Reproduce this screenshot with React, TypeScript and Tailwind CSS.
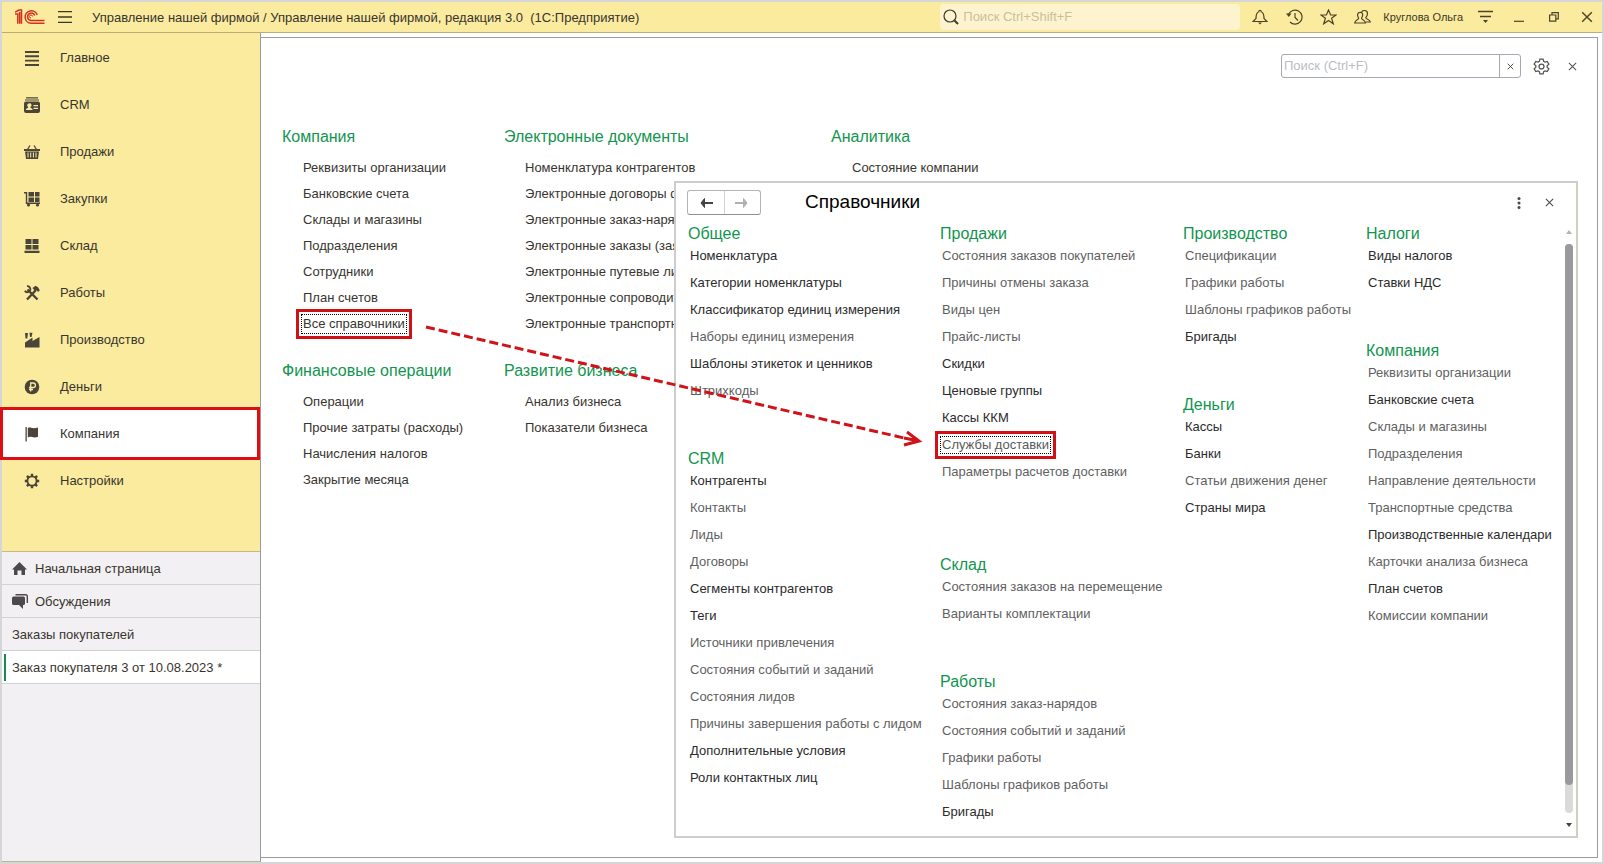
import type { ReactNode } from "react";

type Entry = [name: string, main?: boolean];
type Group = { title: string; items: Entry[]; space?: string };

const sections: { name: string; icon: ReactNode; active?: boolean }[] = [
  { name: "Главное", icon: <path d="M1 2h14M1 6.300h14M1 10.600h14M1 15h14" stroke="currentColor" strokeWidth="1.900" /> },
  {
    name: "CRM",
    icon: (
      <>
        <path d="M2 .8h12M1 3h14" stroke="currentColor" strokeWidth="1.2" />
        <path fillRule="evenodd" d="M2 4.500h12a2 2 0 0 1 2 2V14a2 2 0 0 1-2 2H2a2 2 0 0 1-2-2V6.500a2 2 0 0 1 2-2zM5 6.500a1.800 1.800 0 0 0-1 3.300v1L2 12v1h6.500v-1l-2-1.200v-1A1.800 1.800 0 0 0 5 6.500zM9.500 8v1.200H14V8zm0 2.800V12H14v-1.200z" />
      </>
    ),
  },
  {
    name: "Продажи",
    icon: (
      <>
        <path d="M3.500 5.500 6 1.500M12.500 5.500 10 1.500" stroke="currentColor" strokeWidth="1.300" fill="none" />
        <path d="M0 5h16v2H0z" />
        <path fillRule="evenodd" d="M1 7.500h14L14 15H2zM3.500 8.500v5h1v-5zm2.700 0v5h1v-5zm2.700 0v5h1v-5zm2.600 0v5h1v-5z" />
      </>
    ),
  },
  {
    name: "Закупки",
    icon: (
      <>
        <path d="M0 1.700h2.500v10.600H16" stroke="currentColor" strokeWidth="1.400" fill="none" />
        <path d="M4.500 1H10v4.500H4.500zM11 1h4.500v4.500H11zM4.500 6.500H10V11H4.500zM11 6.500h4.500V11H11z" />
        <circle cx="4.500" cy="14" r="1.600" />
        <circle cx="13.500" cy="14" r="1.600" />
      </>
    ),
  },
  {
    name: "Склад",
    icon: <path d="M1.500 1h6v5h-6zM8.500 1h6v5h-6zM1.500 7h6v4.500h-6zM8.500 7h6v4.500h-6zM.5 12.800h15V15H.5z" />,
  },
  {
    name: "Работы",
    icon: (
      <>
        <path d="M3.500 4.500 13.500 14.500M12 5 3 14.500" stroke="currentColor" strokeWidth="2.400" fill="none" />
        <path d="M.8 5.800A3 3 0 1 0 3 1.200" stroke="currentColor" strokeWidth="1.800" fill="none" />
        <path d="m8.500 3 3-2.200 2.500 1.500 1.800 3-1.600 1.800-1.700-2-1.500.9z" />
      </>
    ),
  },
  { name: "Производство", icon: <path d="M1 1h3l-.7 5.500H1.500zM5.500.8h3L7.500 5H6zM1 10.500 8.500 5.500V9L15.500 5v10.500H1z" /> },
  {
    name: "Деньги",
    icon: (
      <>
        <circle cx="8" cy="8" r="7.300" />
        <path d="M6.700 12.500V4h2.500a2.200 2.200 0 0 1 0 4.500H5M5 10.500h4" stroke="#fbeb9e" strokeWidth="1.300" fill="none" />
      </>
    ),
  },
  { name: "Компания", active: true, icon: <path d="M1.500 1h1.300v14.500H1.500zM3.800 2C6 .5 8 3.500 14 1.500v9.300C9 13 7 9.500 3.800 11.500z" /> },
  {
    name: "Настройки",
    icon: (
      <>
        <circle cx="8" cy="8" r="4.600" stroke="currentColor" strokeWidth="1.900" fill="none" />
        <path
          d="M8 .8v2.700M8 12.500v2.700M.8 8h2.700M12.500 8h2.700M2.900 2.900l1.900 1.900M11.200 11.200l1.900 1.900M2.900 13.100l1.900-1.900M11.200 4.800l1.900-1.900"
          stroke="currentColor"
          strokeWidth="2.400"
        />
      </>
    ),
  },
];

const company: { title: string; items: string[] }[] = [
  {
    title: "Компания",
    items: [
      "Реквизиты организации",
      "Банковские счета",
      "Склады и магазины",
      "Подразделения",
      "Сотрудники",
      "План счетов",
      "Все справочники",
    ],
  },
  {
    title: "Электронные документы",
    items: [
      "Номенклатура контрагентов",
      "Электронные договоры ф",
      "Электронные заказ-наряд",
      "Электронные заказы (зая",
      "Электронные путевые ли",
      "Электронные сопроводит",
      "Электронные транспортн",
    ],
  },
  { title: "Аналитика", items: ["Состояние компании"] },
  {
    title: "Финансовые операции",
    items: ["Операции", "Прочие затраты (расходы)", "Начисления налогов", "Закрытие месяца"],
  },
  { title: "Развитие бизнеса", items: ["Анализ бизнеса", "Показатели бизнеса"] },
];

const catalogs: Group[][] = [
  [
    {
      title: "Общее",
      items: [
        ["Номенклатура", true],
        ["Категории номенклатуры", true],
        ["Классификатор единиц измерения", true],
        ["Наборы единиц измерения"],
        ["Шаблоны этикеток и ценников", true],
        ["Штрихкоды"],
      ],
    },
    {
      title: "CRM",
      items: [
        ["Контрагенты", true],
        ["Контакты"],
        ["Лиды"],
        ["Договоры"],
        ["Сегменты контрагентов", true],
        ["Теги", true],
        ["Источники привлечения"],
        ["Состояния событий и заданий"],
        ["Состояния лидов"],
        ["Причины завершения работы с лидом"],
        ["Дополнительные условия", true],
        ["Роли контактных лиц", true],
      ],
    },
  ],
  [
    {
      title: "Продажи",
      space: "mb-[70px]",
      items: [
        ["Состояния заказов покупателей"],
        ["Причины отмены заказа"],
        ["Виды цен"],
        ["Прайс-листы"],
        ["Скидки", true],
        ["Ценовые группы", true],
        ["Кассы ККМ", true],
        ["Службы доставки"],
        ["Параметры расчетов доставки"],
      ],
    },
    { title: "Склад", items: [["Состояния заказов на перемещение"], ["Варианты комплектации"]] },
    {
      title: "Работы",
      items: [
        ["Состояния заказ-нарядов"],
        ["Состояния событий и заданий"],
        ["Графики работы"],
        ["Шаблоны графиков работы"],
        ["Бригады", true],
      ],
    },
  ],
  [
    {
      title: "Производство",
      items: [["Спецификации"], ["Графики работы"], ["Шаблоны графиков работы"], ["Бригады", true]],
    },
    {
      title: "Деньги",
      items: [["Кассы", true], ["Банки", true], ["Статьи движения денег"], ["Страны мира", true]],
    },
  ],
  [
    { title: "Налоги", items: [["Виды налогов", true], ["Ставки НДС", true]] },
    {
      title: "Компания",
      items: [
        ["Реквизиты организации"],
        ["Банковские счета", true],
        ["Склады и магазины"],
        ["Подразделения"],
        ["Направление деятельности"],
        ["Транспортные средства"],
        ["Производственные календари", true],
        ["Карточки анализа бизнеса"],
        ["План счетов", true],
        ["Комиссии компании"],
      ],
    },
  ],
];

// focused link with a red frame around it
const marked = "-ml-[2px] border border-dotted border-black px-px outline-3 outline-[#d01217]";

const Cross = ({ size }: { size: number }) => (
  <svg width={size} height={size} viewBox="0 0 10 10" stroke="currentColor" strokeWidth="1.200">
    <path d="M1 1l8 8M9 1l-8 8" />
  </svg>
);

const TitleBar = () => (
  <header className="flex h-[31px] items-center border-b border-[#b9ae78] bg-[#fbeb9e] pl-[13px] pr-[9px]">
    <svg width="30" height="16" viewBox="0 0 30 16" fill="none" stroke="#d3301f" strokeWidth="1.500">
      <path d="M0 5h2.800v9.800M0 3.200 4 1h2.500v13.800M4.700 3v11.800" />
      <path d="M22.200 6A6.200 6.200 0 1 0 16 14.200H29.500" />
      <path d="M19.800 6.500A3.700 3.700 0 1 0 16 11.500H29.500" />
      <path d="M17.500 7.500A1.500 1.500 0 1 0 16 9" strokeWidth="1" />
    </svg>
    <button aria-label="Меню" className="ml-[13px]">
      <svg width="14" height="12" viewBox="0 0 14 12" stroke="#3c3827" strokeWidth="1.300">
        <path d="M0 .7h14M0 6h14M0 11.300h14" />
      </svg>
    </button>
    <h1 className="ml-5 flex-1 whitespace-pre pt-px text-[13px]">
      Управление нашей фирмой / Управление нашей фирмой, редакция 3.0  (1С:Предприятие)
    </h1>
    <label className="flex h-[26px] w-[300px] items-center gap-1 rounded-sm bg-[#fdf4cf] px-[3px]">
      <svg width="16" height="16" viewBox="0 0 16 16" fill="none" stroke="#3c3827">
        <circle cx="7" cy="7" r="6" strokeWidth="1.200" />
        <path d="m11.500 11.500 3.500 3.500" strokeWidth="2" />
      </svg>
      <input
        aria-label="Поиск"
        placeholder="Поиск Ctrl+Shift+F"
        className="min-w-0 flex-1 bg-transparent text-[13px] outline-none placeholder:text-[#c9bf9b]"
      />
    </label>
    <div className="flex items-center text-[#4b432a]">
      <button aria-label="Уведомления" className="ml-3">
        <svg width="16" height="16" viewBox="0 0 16 16" fill="none" stroke="currentColor" strokeWidth="1.200">
          <path d="M1 12.500h14L12 9.500C12 5 11.500 3.500 9.300 2.700 9 1 7 1 6.700 2.700 4.500 3.500 4 5 4 9.500z" />
          <path d="M6 13.500h4L8 15.500z" fill="currentColor" stroke="none" />
        </svg>
      </button>
      <button aria-label="История" className="ml-[18px]">
        <svg width="17" height="16" viewBox="0 0 17 16" fill="none" stroke="currentColor" strokeWidth="1.200">
          <path d="M2.500 5.500A7 7 0 1 1 4 13M9 4v4.500l3 3" />
          <path d="M0 4.500h5.500L2.800 8z" fill="currentColor" stroke="none" />
        </svg>
      </button>
      <button aria-label="Избранное" className="ml-[17px]">
        <svg width="17" height="16" viewBox="0 0 17 16" fill="none" stroke="currentColor" strokeWidth="1.200">
          <path d="m8.500 1 2.100 5H16l-4.400 3.300 1.700 5.500-4.800-3.400-4.800 3.400 1.700-5.500L1 6h5.400z" />
        </svg>
      </button>
      <button aria-label="Пользователи" className="ml-[17px]">
        <svg width="17" height="16" viewBox="0 0 17 16" fill="none" stroke="currentColor" strokeWidth="1.200">
          <path d="M7.500 3.500C8 .7 13.500.7 13.500 4.500c0 2-.8 3.200-1.700 4.200 0 1.800 4.200 1.300 4.500 4.300h-4.500" />
          <path d="M6.300 3.300c-3 0-3.600 3-1.600 6C4.500 11 1 10.500.7 14h10.800c-.3-3.500-3.800-3-4-4.700 2-3 1.400-6-1.200-6z" />
        </svg>
      </button>
      <span className="ml-3 text-[11px] text-[#3c3827]">Круглова Ольга</span>
      <button aria-label="Сервис" className="ml-[15px]">
        <svg width="15" height="14" viewBox="0 0 15 14" stroke="currentColor" strokeWidth="1.300">
          <path d="M0 1.500h15M2 6.500h11" />
          <path d="M5 10h5l-2.500 3z" fill="currentColor" stroke="none" />
        </svg>
      </button>
      <button aria-label="Свернуть" className="ml-[21px]">
        <svg width="10" height="10" viewBox="0 0 10 10" stroke="currentColor" strokeWidth="1.200">
          <path d="M0 9.300h10" />
        </svg>
      </button>
      <button aria-label="Развернуть" className="ml-[25px]">
        <svg width="10" height="10" viewBox="0 0 10 10" fill="none" stroke="currentColor" strokeWidth="1.200">
          <path d="M.6 3h6.200v6.200H.6zM3 3V.6h6.300v6.200H7" />
        </svg>
      </button>
      <button aria-label="Закрыть" className="ml-[22px]">
        <Cross size={12} />
      </button>
    </div>
  </header>
);

const Sidebar = () => (
  <aside className="flex w-[259px] shrink-0 flex-col border-r border-b border-r-[#9b9b9b] border-b-[#b9b88c] bg-[#f2f0f2]">
    <nav className="h-[519px] border-b border-[#c3b98a] bg-[#fbeb9e] pt-px">
      {sections.map((s) => (
        <a
          key={s.name}
          href="#"
          className={s.active ? "relative flex h-[47px] items-center bg-white pl-[22px]" : "flex h-[47px] items-center pl-[22px]"}
        >
          <svg width="16" height="16" viewBox="0 0 16 16" fill="currentColor" className="text-[#4a4538]">
            {s.icon}
          </svg>
          <span className="ml-5">{s.name}</span>
          {s.active && <span className="absolute -inset-y-[3px] -left-[2px] right-0 border-3 border-[#dc1014]" />}
        </a>
      ))}
    </nav>
    <a href="#" className="flex h-[33px] items-center gap-2 border-b border-[#d2d2d4] pt-px pl-[10px]">
      <svg width="15" height="14" viewBox="0 0 15 14" fill="#4a4a4a">
        <path d="M7.500 0 15 7.500h-2V13H9.500V8.500h-4V13H2V7.500H0z" />
      </svg>
      Начальная страница
    </a>
    <a href="#" className="flex h-[33px] items-center gap-[7px] border-b border-[#d2d2d4] pt-px pl-[10px]">
      <svg width="16" height="15" viewBox="0 0 16 15" fill="#4a4a4a">
        <path d="M1.500 2.500h10A1.500 1.500 0 0 1 13 4v5.500a1.500 1.500 0 0 1-1.500 1.500H11v4l-4-4H1.500A1.500 1.500 0 0 1 0 9.500V4a1.500 1.500 0 0 1 1.500-1.500z" />
        <path d="M3.500.7h10.300a1.500 1.500 0 0 1 1.500 1.500V9" fill="none" stroke="#4a4a4a" strokeWidth="1.400" />
      </svg>
      Обсуждения
    </a>
    <a href="#" className="flex h-[33px] items-center border-b border-[#d2d2d4] pt-px pl-[10px]">
      Заказы покупателей
    </a>
    <a href="#" className="flex h-[33px] items-center border-b border-[#d2d2d4] bg-white pt-[3px] pb-[2px] pl-[2px]">
      <span className="mr-[6px] w-[2px] self-stretch bg-[#168a50]" />
      Заказ покупателя 3 от 10.08.2023 *
    </a>
  </aside>
);

const Catalogs = () => (
  <section className="absolute top-[143px] right-[19px] bottom-[19px] left-[413px] flex flex-col border-2 border-[#cdcdcd] border-r-[#cfd0bd] bg-white">
    <div className="flex h-[41px] shrink-0 items-center pr-[22px] pb-[2px] pl-[11px]">
      <div className="flex h-[25px] w-[74px] rounded-[3px] border border-[#b4b4b4] border-b-[#8f8f8f]">
        <button aria-label="Назад" className="flex flex-1 items-center justify-center border-r border-[#d4d4d4] text-[#444]">
          <svg width="14" height="10" viewBox="0 0 14 10" fill="none" stroke="currentColor" strokeWidth="2">
            <path d="M14 5H2" />
            <path d="M5.500.5 2 5l3.500 4.500V.5z" fill="currentColor" strokeWidth="1" />
          </svg>
        </button>
        <button aria-label="Вперед" className="flex flex-1 items-center justify-center text-[#b0b0b0]">
          <svg width="14" height="10" viewBox="0 0 14 10" fill="none" stroke="currentColor" strokeWidth="2">
            <path d="M0 5h12" />
            <path d="M8.500.5 12 5 8.500 9.500V.5z" fill="currentColor" strokeWidth="1" />
          </svg>
        </button>
      </div>
      <h2 className="ml-11 flex-1 text-[19px] text-black">Справочники</h2>
      <button aria-label="Ещё" className="mr-[24px] text-[#4a4a4a]">
        <svg width="4" height="12" viewBox="0 0 4 12" fill="currentColor">
          <circle cx="2" cy="1.500" r="1.500" />
          <circle cx="2" cy="6" r="1.500" />
          <circle cx="2" cy="10.500" r="1.500" />
        </svg>
      </button>
      <button aria-label="Закрыть" className="text-[#4a4a4a]">
        <Cross size={9} />
      </button>
    </div>
    <div className="flex min-h-0 flex-1 pr-[3px] pl-3">
      <div className="grid flex-1 grid-cols-[252px_243px_183px_1fr]">
        {catalogs.map((column, i) => (
          <div key={i}>
            {column.map((g) => (
              <div key={g.title} className={g.space ?? "mb-[45px]"}>
                <h3 className="h-[18px] text-base leading-5 text-[#12954f]">{g.title}</h3>
                <ul className="pl-[2px]">
                  {g.items.map(([name, main]) => (
                    <li key={name} className="flex h-[27px] items-center whitespace-nowrap">
                      <a
                        href="#"
                        className={
                          name === "Службы доставки"
                            ? `${marked} leading-4 text-[#5a5a5a] outline-offset-2`
                            : main
                              ? "text-[#2b2b2b]"
                              : "text-[#5f5f5f]"
                        }
                      >
                        {name}
                      </a>
                    </li>
                  ))}
                </ul>
              </div>
            ))}
          </div>
        ))}
      </div>
      <div className="flex w-2 flex-col items-center pt-[6px] pb-[9px]">
        <svg width="6" height="4" viewBox="0 0 6 4" fill="#b5b5b5">
          <path d="M0 4h6L3 0z" />
        </svg>
        <div className="my-[10px] w-2 flex-1 rounded-full bg-[#dadada]">
          <div className="h-[95%] rounded-full bg-[#9a9a9c]" />
        </div>
        <svg width="6" height="4" viewBox="0 0 6 4" fill="#444">
          <path d="M0 0h6L3 4z" />
        </svg>
      </div>
    </div>
  </section>
);

const App = () => {
  return (
    <div className="relative flex min-h-screen flex-col border-2 border-[#d6d6d8] bg-white font-['Liberation_Sans',Arial,sans-serif] text-[13px] text-[#38352f]">
      <TitleBar />
      <div className="flex flex-1">
        <Sidebar />
        <main className="relative mt-1 mr-1 mb-1 flex-1 border border-l-0 border-[#9b9b9b]">
          <div className="flex h-14 items-center justify-end pr-5">
            <div className="flex h-6 w-[240px] rounded-[3px] border border-[#a5a9b3]">
              <input
                aria-label="Поиск (Ctrl+F)"
                placeholder="Поиск (Ctrl+F)"
                className="min-w-0 flex-1 px-[2px] text-[13px] outline-none placeholder:text-[#bcbcc4]"
              />
              <button aria-label="Очистить" className="flex w-[21px] items-center justify-center border-l border-[#a5a9b3]">
                <Cross size={7} />
              </button>
            </div>
            <button aria-label="Настройка" className="ml-3 text-[#555]">
              <svg width="17" height="17" viewBox="0 0 24 24" fill="none" stroke="currentColor" strokeWidth="1.800">
                <path d="M9.700 1.500h4.600l.7 3.200 2 1.100 3.100-1 2.300 4L20 11v2l2.400 2.200-2.300 4-3.100-1-2 1.100-.7 3.200H9.700L9 19.300l-2-1.100-3.100 1-2.300-4L4 13v-2L1.600 8.800l2.300-4 3.100 1 2-1.100z" />
                <circle cx="12" cy="12" r="3.500" />
              </svg>
            </button>
            <button aria-label="Закрыть" className="ml-[18px] text-[#555]">
              <Cross size={9} />
            </button>
          </div>
          <div className="mt-[34px] ml-[21px] grid grid-cols-[222px_327px_1fr] gap-y-[25px]">
            {company.map((g) => (
              <div key={g.title}>
                <h2 className="text-base leading-[18px] text-[#12954f]">{g.title}</h2>
                <ul className="pt-[9px] pl-[21px]">
                  {g.items.map((name) => (
                    <li key={name} className="flex h-[26px] items-center whitespace-nowrap">
                      <a href="#" className={name === "Все справочники" ? `${marked} leading-[18px] outline-offset-2` : ""}>
                        {name}
                      </a>
                    </li>
                  ))}
                </ul>
              </div>
            ))}
          </div>
          <Catalogs />
        </main>
      </div>
      {/* pointer from the menu command to the catalog */}
      <svg className="pointer-events-none absolute top-[320px] left-[420px]" width="504" height="130" fill="none" stroke="#cf1318" strokeWidth="3">
        <path d="M4 5 482 116" strokeDasharray="9 4" />
        <path d="M482 116 497 119M485 110l12 9-15 4" />
      </svg>
    </div>
  );
};

export default App;
